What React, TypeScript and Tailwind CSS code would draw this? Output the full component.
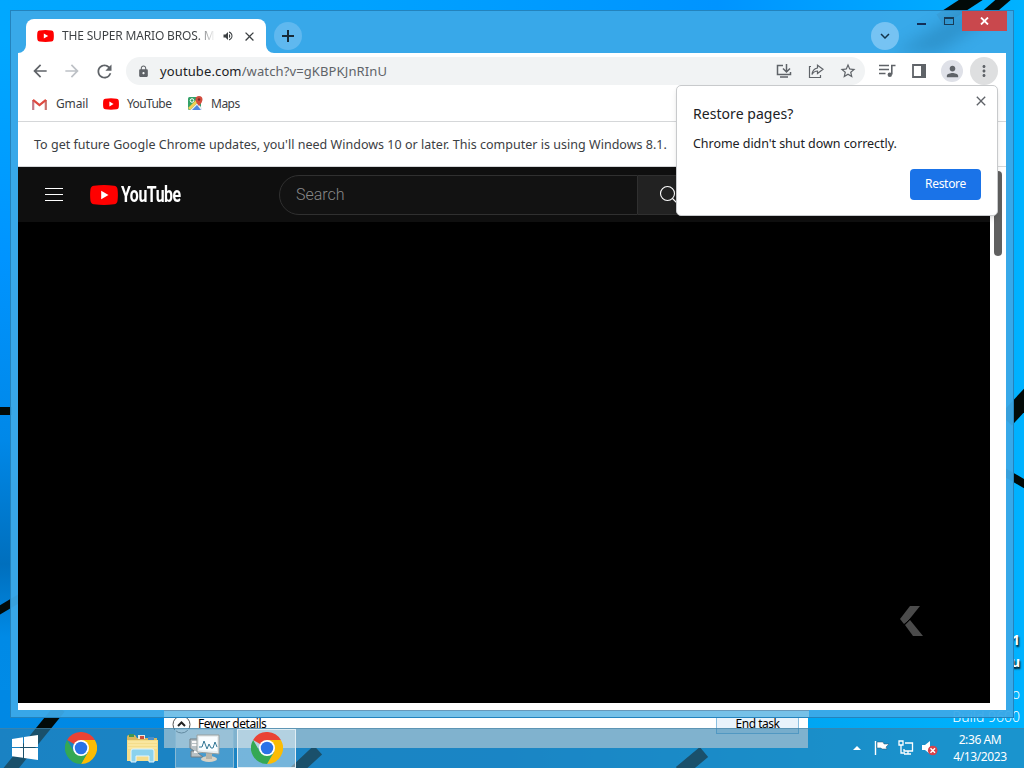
import {
    MdArrowBack,
    MdArrowForward,
    MdClose,
    MdKeyboardArrowDown,
    MdLock,
    MdMoreVert,
    MdPerson,
    MdRefresh,
    MdStarBorder,
    MdVolumeUp,
} from "react-icons/md";

const Wallpaper = () => (
    <svg className="absolute inset-0" width="1024" height="768" viewBox="0 0 1024 768">
        <defs>
            <linearGradient id="sky" x1="0" y1="0" x2="1" y2="0">
                <stop offset="0" stopColor="#00a8ff" />
                <stop offset="0.35" stopColor="#00a2ff" />
                <stop offset="0.7" stopColor="#0094ff" />
                <stop offset="1" stopColor="#00b2ff" />
            </linearGradient>
            <linearGradient id="left" x1="0" y1="0" x2="0" y2="1">
                <stop offset="0" stopColor="#00a8ff" />
                <stop offset="0.3" stopColor="#0094ff" />
                <stop offset="0.55" stopColor="#0088e8" />
                <stop offset="0.72" stopColor="#006fbd" />
                <stop offset="0.82" stopColor="#008ae6" />
                <stop offset="1" stopColor="#008ce8" />
            </linearGradient>
            <linearGradient id="bottom" x1="0" y1="0" x2="1" y2="0">
                <stop offset="0" stopColor="#0088e4" />
                <stop offset="0.5" stopColor="#0090e8" />
                <stop offset="0.82" stopColor="#00a8f4" />
                <stop offset="1" stopColor="#00b4ff" />
            </linearGradient>
        </defs>
        <rect width="1024" height="768" fill="url(#sky)" />
        <rect width="200" height="728" y="40" fill="url(#left)" />
        <rect y="690" width="1024" height="78" fill="url(#bottom)" />
        <g stroke="#020a08" fill="none">
            <path d="M980 -6 L940 20" strokeWidth="13" />
            <path d="M1010 -6 L982 18" strokeWidth="10" />
            <path d="M1030 394 L1006 420" strokeWidth="16" />
            <path d="M1004 472 L1030 487" strokeWidth="8" />
            <path d="M0 411 H12" strokeWidth="8" />
            <path d="M-2 611 L20 598" strokeWidth="8" />
            <path d="M60 708 L8 772" strokeWidth="12" />
            <path d="M318 750 L290 776" strokeWidth="12" />
            <path d="M704 752 L680 772" strokeWidth="13" />
        </g>
    </svg>
);

const YouTubeBadge = ({ className }: { className: string }) => (
    <svg className={className} viewBox="0 0 28 20">
        <path d="M4 .7Q14-.5 24 .7Q27 1 27.5 4Q28.3 10 27.5 16Q27 19 24 19.3Q14 20.5 4 19.3Q1 19 .5 16Q-.3 10 .5 4Q1 1 4 .7Z" fill="#f00" />
        <path d="M11.2 5.8 18.5 10 11.2 14.2Z" fill="#fff" />
    </svg>
);

const ChromeLogo = () => (
    <svg width="32" height="32" viewBox="0 0 48 48">
        <path d="M24 24 3.2 12A24 24 0 0 1 44.8 12H24Z" fill="#ea4335" />
        <path d="M24 12H44.8A24 24 0 0 1 24 48L34.4 30 24 24Z" fill="#fbbc04" />
        <path d="M3.2 12A24 24 0 0 0 24 48L34.4 30 24 24 13.6 30Z" fill="#34a853" />
        <circle cx="24" cy="24" r="12" fill="#fff" />
        <circle cx="24" cy="24" r="9.4" fill="#2a72e8" />
    </svg>
);

const TitleBar = () => (
    <div className="relative flex h-[42px] items-end pl-[7px]">
        <div className="relative ml-2 flex h-[34px] w-[240px] shrink-0 items-center rounded-t-lg bg-white pl-[11px]">
            <svg className="absolute -left-2 bottom-0" width="8" height="8">
                <path d="M8 0V8H0A8 8 0 0 0 8 0Z" fill="#fff" />
            </svg>
            <svg className="absolute -right-2 bottom-0" width="8" height="8">
                <path d="M0 0V8H8A8 8 0 0 1 0 0Z" fill="#fff" />
            </svg>
            <YouTubeBadge className="h-3 w-[17px]" />
            <span className="ml-2 w-[153px] overflow-hidden bg-linear-to-r from-[#3c4043] from-88% to-transparent bg-clip-text text-xs tracking-[-0.17px] whitespace-nowrap text-transparent">
                THE SUPER MARIO BROS. MO
            </span>
            <MdVolumeUp className="ml-[7px] size-3 text-[#3c4043]" />
            <MdClose className="ml-2 size-[15px] text-[#3c4043]" />
        </div>
        <div className="mb-[3px] ml-2 flex size-7 items-center justify-center rounded-full bg-[#5fb8ef]">
            <svg width="14" height="14">
                <path d="M7 1V13M1 7H13" stroke="#172a38" strokeWidth="2" />
            </svg>
        </div>
        <div className="mb-[3px] ml-auto mr-[114px] flex size-7 items-center justify-center rounded-full bg-[#76c3f3]">
            <MdKeyboardArrowDown className="size-[18px] text-[#14344a]" />
        </div>
        {/* window buttons */}
        <div className="absolute top-0 right-[6px] flex h-5 items-start">
            <svg width="45" height="19">
                <path d="M0 13H9" stroke="#132f57" strokeWidth="2" />
                <rect x="27.5" y="6.5" width="9" height="7" fill="none" stroke="#183b56" />
                <path d="M27 7H37" stroke="#183b56" strokeWidth="2" />
            </svg>
            <div className="flex h-5 w-[45px] items-center justify-center bg-[#c9484d]">
                <svg width="9" height="8">
                    <path d="M1 .5 8 7.5M8 .5 1 7.5" stroke="#fff" strokeWidth="1.8" />
                </svg>
            </div>
        </div>
    </div>
);

const Toolbar = () => (
    <div className="flex h-9 items-center pl-3 text-[#5f6368]">
        <MdArrowBack className="size-5" />
        <MdArrowForward className="ml-3 size-5 text-[#bdc1c6]" />
        <MdRefresh className="ml-3 size-[21px]" />
        <div className="ml-[11px] flex h-7 w-[739px] shrink-0 items-center rounded-full bg-[#f1f3f4] pl-[11px]">
            <MdLock className="size-[13px]" />
            <span className="mt-px ml-[10px] text-[13px] tracking-[0.12px] whitespace-nowrap">
                <span className="text-[#202124]">youtube.com</span>/watch?v=gKBPKJnRInU
            </span>
            <div className="mr-[9px] ml-auto flex items-center gap-4">
                <svg width="16" height="16" fill="none" stroke="currentColor" strokeWidth="1.5">
                    <path d="M7 2.5H1.5V11.5H14.5V9M4 14H12M10.5 1V8.5M7 5.5 10.5 9 14 5.5" />
                </svg>
                <svg width="16" height="16" fill="none" stroke="currentColor" strokeWidth="1.2">
                    <path d="M3 3.5H1.5V14.5H12.5V12M9.5 2.2 15 6.3 9.5 10.5V8Q6 8 4 11.5Q4.5 6 9.5 5Z" />
                </svg>
                <MdStarBorder className="size-[18px] -mx-px" />
            </div>
        </div>
        <svg className="ml-[14px] shrink-0" width="17" height="14" stroke="currentColor" fill="none" strokeWidth="1.6">
            <path d="M0 1.5H10M0 5.5H10M0 9.5H6.5M12.8 10.5V1.5H16.5" />
            <circle cx="10.8" cy="10.8" r="2.2" fill="currentColor" stroke="none" />
        </svg>
        <svg className="ml-4 shrink-0" width="14" height="14">
            <path d="M1 1H13V13H1Z" fill="none" stroke="currentColor" strokeWidth="1.8" />
            <path d="M9 0H14V14H9Z" fill="currentColor" />
        </svg>
        <div className="ml-[15px] flex size-[22px] shrink-0 items-center justify-center rounded-full bg-[#dfe1e8]">
            <MdPerson className="size-[17px]" />
        </div>
        <div className="ml-[7px] flex size-7 shrink-0 items-center justify-center rounded-full bg-[#dedfe0]">
            <MdMoreVert className="size-[18px]" />
        </div>
    </div>
);

const Bookmarks = () => (
    <div className="flex h-[33px] items-center border-b border-[#d5d7d9] pb-[3px] pl-[14px] text-xs tracking-[-0.15px] text-[#3c4043]">
        <svg width="15" height="12" viewBox="0 0 15 12" fill="none" strokeWidth="2.2">
            <path d="M1.2 12V2" stroke="#c57b8b" />
            <path d="M13.8 12V2" stroke="#c8736f" />
            <path d="M1 1.8 7.5 7 14 1.8" stroke="#de4940" />
        </svg>
        <span className="ml-[9px] w-[31px] whitespace-nowrap">Gmail</span>
        <YouTubeBadge className="ml-4 h-3 w-4" />
        <span className="ml-2 w-[45px] tracking-[-0.6px] whitespace-nowrap">YouTube</span>
        <svg className="ml-4" width="15" height="15" viewBox="0 0 15 15">
            <rect y="1" width="13" height="13" rx="1.5" fill="#34a168" />
            <path d="M2 14 9 7 14 12V14Z" fill="#e7edf2" />
            <path d="M4 14 9 9 13 14Z" fill="#4e86df" />
            <path d="M0 12 11 1 13 3 2 14Z" fill="#f3cf52" />
            <circle cx="4" cy="4.5" r="1.8" fill="none" stroke="#fff" />
            <path d="M11 10Q7.5 6 7.5 3.5A3.5 3.5 0 0 1 14.5 3.5Q14.5 6 11 10Z" fill="#d34c3e" />
            <circle cx="11" cy="3.5" r="1.2" fill="#7d2924" />
        </svg>
        <span className="ml-2 tracking-[-0.5px]">Maps</span>
    </div>
);

const Masthead = () => (
    <div className="flex h-[55px] w-[972px] items-center bg-[#0f0f0f] pl-[27px]">
        <svg width="18" height="14" stroke="#fff">
            <path d="M0 .5H18M0 6.5H18M0 12.5H18" />
        </svg>
        <YouTubeBadge className="ml-[27px] h-5 w-7" />
        <span className="ml-[3px] flex w-[59px] shrink-0">
            <span className="origin-left scale-x-[0.72] font-['Roboto'] text-[22px] leading-5 font-bold tracking-[-0.6px] text-white">
                YouTube
            </span>
        </span>
        <div className="ml-[99px] flex h-10 w-[359px] shrink-0 items-center rounded-l-full border border-[#303030] bg-[#121212] pl-4 font-['Roboto'] text-base font-light text-[#888]">
            Search
        </div>
        <div className="flex h-10 w-16 shrink-0 items-center rounded-r-full border border-l-0 border-[#303030] bg-[#222] pl-[21px]">
            <svg width="20" height="20" fill="none" stroke="#fff" strokeWidth="1.1">
                <circle cx="8.5" cy="8.5" r="7" />
                <path d="M13.5 13.5 19 19" />
            </svg>
        </div>
    </div>
);

const RestoreBubble = () => (
    <div className="absolute top-[74px] left-[665px] flex h-[131px] w-[322px] flex-col rounded-[5px] border border-[#c8cacc] bg-white pt-[18px] pr-[16px] pl-4 text-[#202124] shadow-md">
        <MdClose className="absolute top-[7px] right-2 size-4 text-[#5f6368]" />
        <div className="text-sm leading-5 tracking-[0.05px]">Restore pages?</div>
        <div className="mt-[10px] text-[12.5px] leading-5 tracking-[-0.05px] whitespace-nowrap">Chrome didn't shut down correctly.</div>
        <div className="mt-[15px] flex h-[31px] w-[71px] items-center justify-center self-end rounded bg-[#1a73e8] pb-0.5 text-xs tracking-[-0.3px] text-white">
            Restore
        </div>
    </div>
);

const ChromeWindow = () => (
    <div className="absolute top-[10px] left-[10px] flex h-[708px] w-[1004px] flex-col border border-[#2383bd] bg-[#3ba9e8]/95">
        <svg className="absolute top-0 right-0" width="180" height="42">
            <path d="M130 0 60 42H105L166 0Z" fill="#16608b" opacity=".3" className="blur-sm" />
        </svg>
        <TitleBar />
        <div className="mx-[7px] flex h-[657px] flex-col bg-white">
            <Toolbar />
            <Bookmarks />
            <div className="flex h-[45px] items-center border-b border-[#d5d7d9] pt-0.5 pl-4 text-[12.5px] tracking-[0.02px] whitespace-nowrap text-[#3c4043]">
                To get future Google Chrome updates, you'll need Windows 10 or later. This computer is using Windows 8.1.
            </div>
            <div className="flex">
                <div className="h-[536px] w-[972px] bg-black">
                    <Masthead />
                    <div className="flex h-[481px] items-end justify-end pr-[66px] pb-[66px]">
                        <svg width="24" height="32" fill="#4b4b4b">
                            <path d="M10 1H20L8 16 4 19 0 14Z" />
                            <path d="M5 20 10 15 23 31H13Z" />
                            <path d="M4 20 11 13" stroke="#000" />
                        </svg>
                    </div>
                </div>
                <div className="mt-1 ml-1 h-[85px] w-2 rounded-full bg-[#606060]" />
            </div>
        </div>
        {/* lower frame edge over the pale window behind it */}
        <div className="mr-[204px] ml-[153px] h-[7px] border-t border-[#6798ba] bg-[#76c1e8]" />
        <RestoreBubble />
    </div>
);

const TaskManager = () => (
    <div className="absolute top-[700px] left-[164px] flex h-12 w-[644px] items-start bg-white pt-[15px] pl-2 text-xs text-black">
        <svg className="mt-px" width="19" height="19" fill="none">
            <circle cx="9.5" cy="8.5" r="8.5" stroke="#555" />
            <path d="M6 10 9.5 6.5 13 10" stroke="#222" strokeWidth="2" />
        </svg>
        <span className="ml-[7px] leading-[18px] tracking-[-0.45px] whitespace-nowrap">Fewer details</span>
        <div className="mr-[9px] ml-auto h-[19px] w-[83px] border border-[#8bbfe0] bg-[#e9f3fb] text-center leading-4 tracking-[-0.5px]">
            End task
        </div>
    </div>
);

const Taskbar = () => (
    <div className="absolute top-[728px] left-0 flex h-10 w-full items-center border-t border-[#4783a5]/60 bg-[#2c7fae]/60 pb-px pl-3 text-white">
        <svg width="27" height="26" fill="#fff">
            <path d="M0 4 11 2.3V12H0ZM12 2 26 0V12H12ZM0 13H11V22.8L0 21.2ZM12 13H26V25L12 23Z" />
        </svg>
        <div className="ml-[26px]">
            <ChromeLogo />
        </div>
        <svg className="ml-[29px]" width="33" height="30" viewBox="0 0 33 30">
            <path d="M1 4Q1 2 3 2H9L11 5H31V28H1Z" fill="#d7b75f" />
            <path d="M3 1H8V4H3Z" fill="#3d9656" />
            <path d="M12 2H19V6H12Z" fill="#e9e9df" />
            <path d="M14 3H18V6H14Z" fill="#c94f3f" />
            <path d="M22 4H28V7H22Z" fill="#4c8fc9" />
            <path d="M1 7H32V28H1Z" fill="#f4dd8b" />
            <path d="M2 9H31M2 12H31M2 15H31" stroke="#fff0b3" />
            <path d="M5 29V18Q5 16 7 16H26Q28 16 28 18V29H23V23H10V29Z" fill="#8bd2ed" stroke="#e1f6ff" />
        </svg>
        <div className="ml-[16px] flex h-[39px] w-[59px] items-center justify-center border border-[#88b9d4] bg-white/20">
            <svg width="31" height="28" viewBox="0 0 31 28">
                <path d="M1 5H9V19L14 23H2V17H5L1 14Z" fill="#b8c1c5" stroke="#737e84" />
                <path d="M3 8H8M3 11H8M5 18H15" stroke="#f8f8f8" strokeWidth="2" />
                <ellipse cx="20" cy="25" rx="8" ry="3" fill="#d8d2c4" />
                <path d="M17 19H23V25H17Z" fill="#b5b4aa" />
                <path d="M8 1H30V20L8 18Z" fill="#e8edef" stroke="#969f9f" />
                <path d="M10 3H28V17L10 16Z" fill="#f9fdff" />
                <path d="M10 13H13L15 7 18 15 20 10 22 14H24L26 8 28 13" fill="none" stroke="#337795" />
            </svg>
        </div>
        <div className="ml-[3px] flex h-[39px] w-[59px] items-center justify-center border border-[#e0edf3] bg-white/40">
            <ChromeLogo />
        </div>
        <svg className="ml-auto" width="8" height="5">
            <path d="M4 0 8 4H0Z" fill="#fff" />
        </svg>
        <svg className="ml-[13px]" width="16" height="16">
            <path d="M1.5 1V15" stroke="#fff" strokeWidth="1.4" />
            <path d="M3 2H9L10 4H15L12 7 13 9H8L7 8H3Z" fill="#fff" stroke="#24536e" strokeWidth=".5" />
        </svg>
        <svg className="ml-2" width="16" height="16" fill="none" stroke="#fff" strokeWidth="1.3">
            <path d="M7 3H14.5V11H6V9M10 11V14M6 14H13" />
            <path d="M1 1H5V5H1ZM3 5V13H7" />
        </svg>
        <svg className="ml-2" width="16" height="16">
            <path d="M0 5H3L8 1V14L3 10H0Z" fill="#fff" />
            <circle cx="10.7" cy="10.5" r="4.8" fill="#d84149" />
            <path d="M8.5 8.3 13 12.8M13 8.3 8.5 12.8" stroke="#fff" strokeWidth="1.5" />
        </svg>
        <div className="mr-[15px] ml-[13px] w-[58px] text-center text-xs leading-[17px] tracking-[-0.4px] whitespace-nowrap">
            <div>2:36 AM</div>
            <div className="-mx-1">4/13/2023</div>
        </div>
    </div>
);

export default function App() {
    return (
        <div className="relative h-[768px] w-[1024px] overflow-hidden bg-[#009cff] font-['Noto_Sans',sans-serif]">
            <Wallpaper />
            {/* desktop watermark peeking out behind the window */}
            <div className="absolute top-[629px] right-1 flex flex-col items-end text-white">
                <b className="text-sm leading-[22px] [text-shadow:1px_2px_2px_#000]">1</b>
                <b className="text-sm leading-[22px] [text-shadow:1px_2px_2px_#000]">u</b>
                <span className="mt-[10px] text-sm leading-[22px] font-light">o</span>
                <span className="mt-px text-sm leading-[22px] font-light whitespace-nowrap">Build 9600</span>
            </div>
            <TaskManager />
            <ChromeWindow />
            <Taskbar />
        </div>
    );
}
